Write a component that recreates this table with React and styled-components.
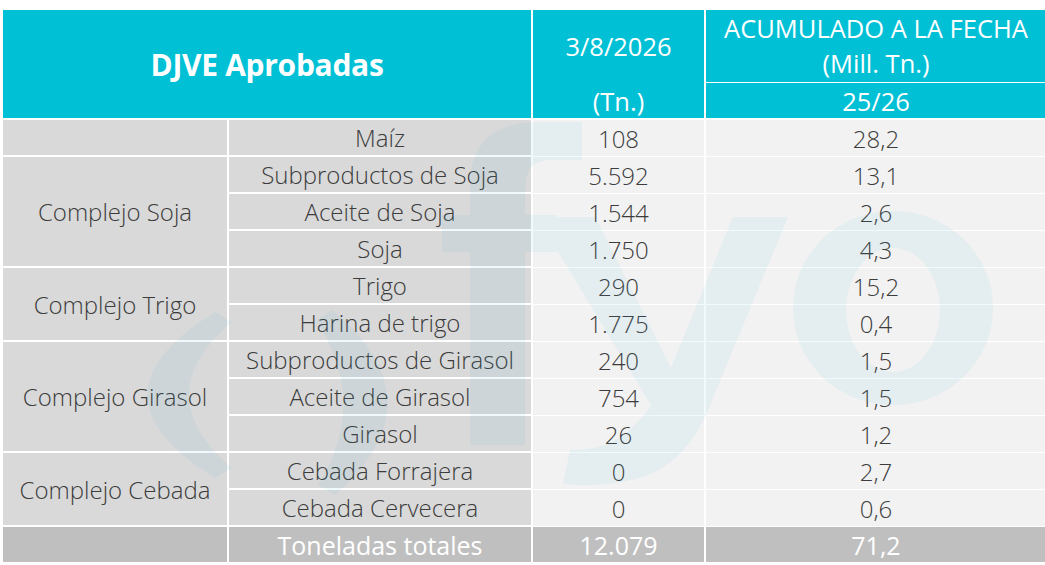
import React, { Fragment } from "react";
import styled, { createGlobalStyle } from "styled-components";

const GlobalStyle = createGlobalStyle`
  body {
    margin: 0;
    background: #ffffff;
    font-family: "Open Sans", Roboto, sans-serif;
  }
`;

const CYAN = "#00c0d6";

const Page = styled.div`
  position: relative;
  width: 1045px;
  height: 565px;
  box-sizing: border-box;
  padding: 10px 0 0 3px;
  overflow: hidden;
`;

const Table = styled.div`
  display: grid;
  grid-template-columns: 224px 302px 171px 340px;
  grid-template-rows: 108px repeat(12, 35px);
  gap: 2px;
`;

const TitleHead = styled.div`
  grid-column: span 2;
  background: ${CYAN};
  color: #fff;
  display: flex;
  align-items: center;
  justify-content: center;
  font-size: 30px;
  font-weight: 700;
  letter-spacing: -0.3px;
`;

const ColHead = styled.div`
  background: ${CYAN};
  color: #fff;
  display: flex;
  flex-direction: column;
  font-size: 25.5px;
  font-weight: 400;
`;

const HeadTop = styled.div`
  height: 72px;
  display: flex;
  flex-direction: column;
  align-items: center;
  justify-content: center;
  line-height: 35px;
  border-bottom: 1px solid ${(p) => (p.$split ? "#ffffff" : "transparent")};
`;

const HeadBottom = styled.div`
  flex: 1;
  display: flex;
  align-items: center;
  justify-content: center;
`;

const tones = {
  grey: { bg: "#d9d9d9", fg: "#3c3c3c" },
  light: { bg: "#f2f2f2", fg: "#3c3c3c" },
  total: { bg: "#bfbfbf", fg: "#ffffff" },
};

const Cell = styled.div`
  grid-row: span ${(p) => p.$span || 1};
  background: ${(p) => tones[p.$tone].bg};
  color: ${(p) => tones[p.$tone].fg};
  margin-bottom: ${(p) => (p.$tone === "light" ? "-1px" : "0")};
  display: flex;
  align-items: center;
  justify-content: center;
  font-size: ${(p) => (p.$tone === "total" ? "25px" : "24px")};
  font-weight: ${(p) => (p.$tone === "total" ? 400 : 300)};
  white-space: nowrap;
`;

const Watermark = styled.svg`
  position: absolute;
  left: 0;
  top: 0;
  pointer-events: none;
`;

const groups = [
  { name: "", items: [["Maíz", "108", "28,2"]] },
  {
    name: "Complejo Soja",
    items: [
      ["Subproductos de Soja", "5.592", "13,1"],
      ["Aceite de Soja", "1.544", "2,6"],
      ["Soja", "1.750", "4,3"],
    ],
  },
  {
    name: "Complejo Trigo",
    items: [
      ["Trigo", "290", "15,2"],
      ["Harina de trigo", "1.775", "0,4"],
    ],
  },
  {
    name: "Complejo Girasol",
    items: [
      ["Subproductos de Girasol", "240", "1,5"],
      ["Aceite de Girasol", "754", "1,5"],
      ["Girasol", "26", "1,2"],
    ],
  },
  {
    name: "Complejo Cebada",
    items: [
      ["Cebada Forrajera", "0", "2,7"],
      ["Cebada Cervecera", "0", "0,6"],
    ],
  },
];

// faint logo behind the numbers
const Logo = () => (
  <Watermark width="1045" height="565" viewBox="0 0 1045 565">
    <g fill="rgb(60,175,210)" opacity="0.07">
      <path d="M215 312 Q80 395 215 478 L232 468 Q146 395 232 322 Z" />
      <path d="M333 310 Q441 402 335 495 L318 485 Q370 402 316 320 Z" />
      <path d="M470 445 L470 185 Q470 122 540 122 L582 122 L582 160 L550 160 Q525 160 525 190 L525 445 Z" />
      <rect x="442" y="215" width="115" height="37" />
      <path d="M537 217 L595 217 L690 405 L660 420 Z" />
      <path d="M733 217 L788 217 L712 400 Q690 462 640 478 Q600 488 563 484 L570 450 Q610 450 632 428 Q650 410 662 390 Z" />
      <path
        fillRule="evenodd"
        d="M793 308 A100 97 0 1 0 993 308 A100 97 0 1 0 793 308 Z M846 310 A47 62 0 1 0 940 310 A47 62 0 1 0 846 310 Z"
      />
    </g>
  </Watermark>
);

const App = () => {
  return (
    <Page>
      <GlobalStyle />
      <Table>
        <TitleHead>DJVE Aprobadas</TitleHead>
        <ColHead>
          <HeadTop>3/8/2026</HeadTop>
          <HeadBottom>(Tn.)</HeadBottom>
        </ColHead>
        <ColHead>
          <HeadTop $split>
            <span>ACUMULADO A LA FECHA</span>
            <span>(Mill. Tn.)</span>
          </HeadTop>
          <HeadBottom>25/26</HeadBottom>
        </ColHead>

        {groups.map((group) =>
          group.items.map((item, i) => (
            <Fragment key={item[0]}>
              {i === 0 && (
                <Cell $tone="grey" $span={group.items.length}>
                  {group.name}
                </Cell>
              )}
              <Cell $tone="grey">{item[0]}</Cell>
              <Cell $tone="light">{item[1]}</Cell>
              <Cell $tone="light">{item[2]}</Cell>
            </Fragment>
          ))
        )}

        <Cell $tone="total" />
        <Cell $tone="total">Toneladas totales</Cell>
        <Cell $tone="total">12.079</Cell>
        <Cell $tone="total">71,2</Cell>
      </Table>
      <Logo />
    </Page>
  );
};

export default App;
